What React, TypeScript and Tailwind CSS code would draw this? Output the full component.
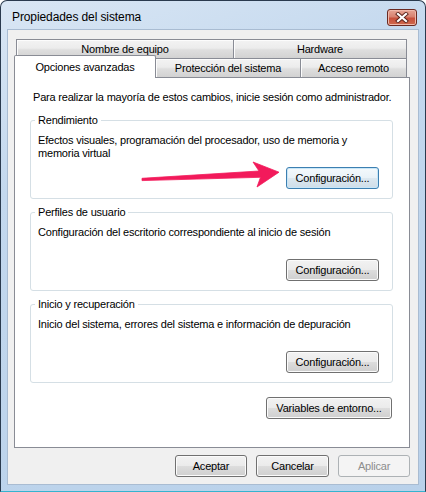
import clsx from "clsx";
import type { ReactNode } from "react";

// classic Win7 push button, three looks: normal, focused (default) and disabled
function Btn({
  children,
  className,
  focused,
  disabled,
}: {
  children: ReactNode;
  className?: string;
  focused?: boolean;
  disabled?: boolean;
}) {
  return (
    <button
      disabled={disabled}
      className={clsx(
        "h-[22px] rounded-[3px] border text-[11px] leading-none",
        disabled
          ? "border-[#adb2b5] bg-[#f4f4f4] text-[#8d8d8d]"
          : focused
            ? "border-[#3c7fb1] bg-[linear-gradient(#f4f9fc_0%,#e9f2f8_49%,#dce8f0_50%,#cfdde8_100%)] text-black shadow-[inset_0_0_0_1px_#c8e6f7]"
            : "border-[#707070] bg-[linear-gradient(#f2f2f2_0%,#ebebeb_49%,#dddddd_50%,#cfcfcf_100%)] text-black shadow-[inset_0_0_0_1px_#fbfbfb]",
        className,
      )}
    >
      {children}
    </button>
  );
}

function Group({
  title,
  children,
  focused,
}: {
  title: string;
  children: ReactNode;
  focused?: boolean;
}) {
  return (
    <fieldset className="w-[363px] rounded-[3px] border border-[#d5dfe5] px-[7px] pb-[9px]">
      <legend className="-ml-[3px] px-[3px] leading-[13px]">{title}</legend>
      <div className="flex h-[62px] flex-col">
        <p className="pt-[7px] leading-[13px]">{children}</p>
        <div className="mt-auto flex justify-end pr-[6px]">
          <Btn focused={focused} className="w-[93px]">
            Configuración...
          </Btn>
        </div>
      </div>
    </fieldset>
  );
}

const tabBg =
  "bg-[linear-gradient(#f3f3f3_0%,#ececec_45%,#dedede_55%,#d2d2d2_100%)] shadow-[inset_1px_1px_0_#fcfcfc]";

function CloseButton() {
  return (
    <div className="flex h-[17px] w-[30px] items-center justify-center rounded-[3px] border border-[#6b2a22] bg-[linear-gradient(#e6a595_0%,#d88270_45%,#c7503c_55%,#cf6a4e_100%)] shadow-[inset_0_0_0_1px_#efb9ab]">
      <svg width="14" height="11" viewBox="0 0 14 11">
        <path
          d="M3 2 L11 9 M11 2 L3 9"
          stroke="#5b231b"
          strokeWidth="4"
          strokeLinecap="square"
        />
        <path
          d="M3 2 L11 9 M11 2 L3 9"
          stroke="#ffffff"
          strokeWidth="2.2"
          strokeLinecap="square"
        />
      </svg>
    </div>
  );
}

export default function App() {
  return (
    <div className="relative h-[492px] w-[426px] bg-white font-['Liberation_Sans',Arial,sans-serif] text-[11px] tracking-[-0.2px] text-black">
      <div className="flex h-full w-full flex-col rounded-t-[7px] border border-[#2a3a4e] border-b-[#35b3cf] bg-[linear-gradient(160deg,#d9e6f4_0%,#c3d8ee_30%,#b9d1ea_100%)] px-[6px] pb-[6px]">
        {/* title bar */}
        <div className="flex h-[28px] shrink-0 items-center justify-between pt-[4px] pl-[5px] pr-[2px]">
          <span className="text-[12px] tracking-[-0.1px] text-black">Propiedades del sistema</span>
          <CloseButton />
        </div>

        {/* client area */}
        <div className="flex flex-1 flex-col border border-[#a9bcd2] bg-[#f0f0f0] pl-[6px] pr-[8px] pt-[9px]">
          {/* back row of tabs */}
          <div className="ml-[2px] flex h-[19px] w-[391px]">
            <div className={clsx("flex w-[217px] items-center justify-center border-l border-t border-[#898c95]", tabBg)}>
              Nombre de equipo
            </div>
            <div className={clsx("flex flex-1 items-center justify-center border-x border-t border-[#898c95]", tabBg)}>
              Hardware
            </div>
          </div>
          {/* front row of tabs */}
          <div className="flex h-[19px] w-[393px] items-end">
            <div className="relative z-10 -mt-[3px] flex h-[23px] w-[142px] self-start justify-center rounded-t-[2px] border-x border-t border-[#898c95] bg-white pt-[3px]">
              Opciones avanzadas
            </div>
            <div className={clsx("flex h-[19px] w-[144px] items-center justify-center border-t border-[#898c95]", tabBg)}>
              Protección del sistema
            </div>
            <div className={clsx("flex h-[19px] flex-1 items-center justify-center border-x border-t border-[#898c95]", tabBg)}>
              Acceso remoto
            </div>
          </div>

          {/* tab page */}
          <div className="flex h-[371px] w-[396px] flex-col border border-[#898c95] bg-white pl-[15px] pr-[16px] pt-[13px]">
            <p className="ml-[3px] leading-[13px]">
              Para realizar la mayoría de estos cambios, inicie sesión como administrador.
            </p>
            <div className="mt-[10px] flex flex-col gap-[7px]">
              <Group title="Rendimiento" focused>
                Efectos visuales, programación del procesador, uso de memoria y
                <br />
                memoria virtual
              </Group>
              <Group title="Perfiles de usuario">
                Configuración del escritorio correspondiente al inicio de sesión
              </Group>
              <Group title="Inicio y recuperación">
                Inicio del sistema, errores del sistema e información de depuración
              </Group>
            </div>
            <div className="mt-[14px] flex justify-end">
              <Btn className="mr-[1px] w-[126px]">Variables de entorno...</Btn>
            </div>
          </div>

          {/* dialog buttons */}
          <div className="mt-[7px] flex justify-end gap-[9px]">
            <Btn className="w-[72px]">Aceptar</Btn>
            <Btn className="w-[73px]">Cancelar</Btn>
            <Btn className="w-[72px]" disabled>
              Aplicar
            </Btn>
          </div>
        </div>
      </div>

      {/* annotation arrow pointing at the first settings button */}
      <svg
        className="pointer-events-none absolute left-0 top-0"
        width="426"
        height="492"
        viewBox="0 0 426 492"
      >
        <path
          d="M142 178.3 L259 171 L253 162 L279 172.2 L257 187 L260.5 177.3 L142 180.6 Z"
          fill="#f21a5b"
          stroke="#f21a5b"
          strokeWidth="0.8"
          strokeLinejoin="round"
        />
      </svg>
    </div>
  );
}
